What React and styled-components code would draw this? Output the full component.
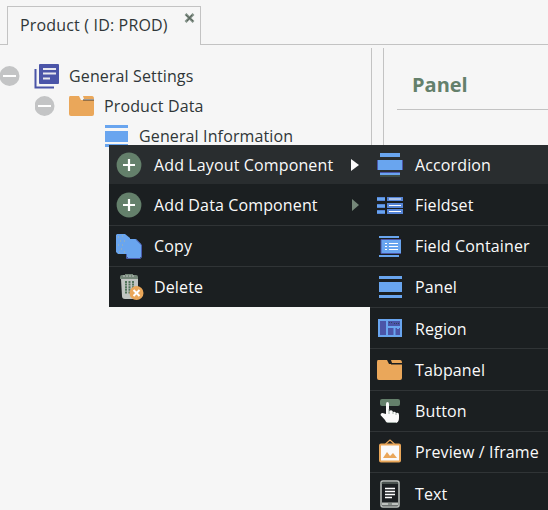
import React from "react";
import styled, { createGlobalStyle } from "styled-components";

const GlobalStyle = createGlobalStyle`
  * { box-sizing: border-box; }
  html, body { margin: 0; overflow: hidden; background: #f6f6f6; }
  svg { display: block; flex: none; }
`;

const Page = styled.main`
  width: 548px;
  height: 510px;
  position: relative;
  overflow: hidden;
  display: flex;
  flex-direction: column;
  background: #f6f6f6;
  color: #303638;
  font-family: "Open Sans", sans-serif;
  font-size: 16px;
  letter-spacing: 0.13px;
  white-space: nowrap;
`;

const TabStrip = styled.header`
  display: grid;
  grid-template-columns: 7px 194px 1fr;
  height: 45px;
  padding-top: 6px;
  flex: none;
`;

const StripLine = styled.div`
  border-bottom: 1px solid #c3c3c3;
`;

const Tab = styled.div`
  display: flex;
  justify-content: space-between;
  border: 1px solid #c3c3c3;
  border-bottom: 0;
  padding: 6px 5px 0 12px;
  line-height: 24px;
`;

const TabTitle = styled.span`
  letter-spacing: 0.17px;
`;

const Body = styled.div`
  display: grid;
  grid-template-columns: 372px 11px 1fr;
  flex: 1;
  padding-top: 3px;
`;

const TreePane = styled.nav`
  border-right: 1px solid #c3c3c3;
  padding-top: 13px;
`;

const TreeRow = styled.div`
  height: 30px;
  display: flex;
  align-items: center;
  padding-left: ${(p) => p.$indent}px;
`;

const TreeIcon = styled.span`
  display: flex;
  width: 26px;
  margin-left: ${(p) => p.$gap}px;
  margin-right: 9px;
`;

const DetailPane = styled.section`
  grid-column: 3;
  border-left: 1px solid #c3c3c3;
  padding-left: 13px;
`;

const PanelTitle = styled.h2`
  margin: 0;
  height: 62px;
  padding: 21px 0 0 15px;
  border-bottom: 1px solid #c3c3c3;
  color: #64806b;
  font-size: 20px;
  line-height: 32px;
  font-weight: 700;
  letter-spacing: 0;
`;

const Menu = styled.div`
  position: absolute;
  z-index: ${(p) => (p.$sub ? 2 : 1)};
  left: ${(p) => (p.$sub ? 370 : 109)}px;
  top: 145px;
  width: ${(p) => (p.$sub ? 178 : 261)}px;
  background: #1b1f21;
  color: #fafafa;
  font-weight: 500;
`;

const MenuRow = styled.div`
  height: ${(p) => p.$height}px;
  display: flex;
  align-items: center;
  padding-left: 7px;
  background: ${(p) => (p.$active ? "#292d2f" : "transparent")};
  border-bottom: ${(p) => (p.$line ? "1px solid #303436" : "0")};
`;

const MenuIcon = styled.span`
  display: flex;
  width: 26px;
  margin-right: 12px;
`;

const MenuLabel = styled.span`
  flex: 1;
  padding-top: ${(p) => p.$drop || 0}px;
`;

const Arrow = styled.span`
  width: 0;
  height: 0;
  margin-right: 11px;
  border: solid transparent;
  border-width: ${(p) => (p.$active ? "6px 0 6px 8px" : "6px 0 6px 7px")};
  border-left-color: ${(p) => (p.$active ? "#fafafa" : "#758779")};
`;

const Svg = ({ w = 26, h = 26, children }) => (
  <svg width={w} height={h} viewBox={`0 0 ${w} ${h}`}>{children}</svg>
);

const Minus = () => (
  <Svg w={20} h={20}>
    <circle cx="9.500" cy="10" r="10" fill="#c3c4c5" />
    <path d="M3 10h13" stroke="#fff" strokeWidth="2" />
  </Svg>
);

const Docs = () => (
  <Svg w={26} h={26}>
    <path d="M1.500 6v18.500H20" fill="none" stroke="#4b55a8" strokeWidth="2" />
    <rect x="5" y="1" width="20" height="20" rx="1" fill="#4b55a8" />
    <path d="M9 6h13M9 10.500h13M9 15.500h7" stroke="#e8e8ee" strokeWidth="2" />
  </Svg>
);

const Folder = ({ dark }) => (
  <Svg w={26} h={20}>
    <path d="M1 0h9l2 4h13v14q0 2-2 2H2q-2 0-2-2V2q0-2 1-2z" fill="#eaa75a" />
    <path d="M14 0h9q2 0 2 3H15z" fill="#eaa75a" />
    <path d="M14 4h11" stroke={dark ? "#1b1f21" : "#453d35"} strokeWidth="1" />
  </Svg>
);

const PanelGlyph = ({ light }) => (
  <Svg w={26} h={24}>
    <path
      d={light ? "M1 1h23v3H1zM1 7h23v11H1zM1 20h23v3H1z" : "M2 1h23v3H2zM2 7h23v10H2zM2 20h23v3H2z"}
      fill="#69a5ef"
    />
  </Svg>
);

const Plus = () => (
  <Svg w={26} h={26}>
    <circle cx="13" cy="13" r="12.4" fill="#64806b" />
    <path d="M7 13h12M13 7v12" stroke="#fff" strokeWidth="2.2" />
  </Svg>
);

const Copy = () => (
  <Svg w={26} h={26}>
    <path d="M1 1h8l5 4v16H2l-2-2V2z" fill="#69a5ef" />
    <path d="M11 6h9l5 5v13l-1 1H12l-2-2V7z" fill="#69a5ef" />
    <path d="M10.500 21v4.500h14l1-1V12L20 6.500" fill="none" stroke="#4a5daf" />
    <path d="M2 4h1M6 3h1M4 8h1M2 12h1M5 16h1M3 19h1M8 19h1M8 8h1M6 12h1" stroke="#afb59e" />
  </Svg>
);

const Trash = () => (
  <Svg w={28} h={28}>
    <path d="M4 4q0-2 2-2h3V1h8v1h3q2 0 2 2v2H4z" fill="#758779" />
    <path d="M7 3h12" stroke="#c1c5c2" strokeDasharray="2 1" />
    <path d="M5 6h17v17q0 3-3 3H9q-3 0-3-3z" fill="#c1c5c2" />
    <path d="M10 8v13M13.500 8v13M17 8v11" stroke="#52745b" strokeWidth="2" strokeDasharray="2 .6" />
    <circle cx="20.500" cy="20" r="7" fill="#eaa75a" />
    <path d="M17.500 17l6 6M23.500 17l-6 6" stroke="#fff" strokeWidth="2" />
  </Svg>
);

const Accordion = () => (
  <Svg w={26} h={25}>
    <path d="M3 1h20v4H3zM1 8h24v10H1zM3 20h20v3H3z" fill="#69a5ef" />
    <path d="M.5 8v10M25.500 8v10M3 20.500h20" stroke="#4b55a8" />
    <path d="M3 24h20" stroke="#526c5c" />
  </Svg>
);

const Fieldset = () => (
  <Svg w={26} h={18}>
    <path d="M0 1h8v4H0zM0 8h8v4H0zM0 14h8v4H0zM10 1h16v4H10zM10 7h16v5H10zM10 13h16v5H10z" fill="#5584d6" />
    <path d="M12 3h12M12 9.500h12M12 15.500h12" stroke="#fff" />
    <path d="M0 3h8M0 10h8M0 16h8" stroke="#69a5ef" strokeWidth="2" />
  </Svg>
);

const Container = () => (
  <Svg w={26} h={24}>
    <path d="M2 2h20v2H2zM4 6h20v13H4zM2 21h20v2H2z" fill="#69a5ef" />
    <path d="M24 5.500H4v14h20" fill="none" stroke="#4b55a8" />
    <path d="M8 9.500h2M12 9.500h9M8 12.500h2M12 12.500h9M8 15.500h2M12 15.500h9" stroke="#fff" strokeWidth="1" />
  </Svg>
);

const Region = () => (
  <Svg w={26} h={20}>
    <rect x="2" y="2" width="22" height="16" fill="#4b55a8" stroke="#69a5ef" strokeWidth="2" />
    <path d="M10 3v14M11 9h12M17.500 9v8M21 9v2" stroke="#69a5ef" strokeWidth="2" />
    <path d="M12 4.500h4M17 5.500h5" stroke="#30445e" strokeDasharray="1 1" />
  </Svg>
);

const ButtonGlyph = () => (
  <Svg w={26} h={28}>
    <rect x="3" y="2" width="20" height="7" rx="2" fill="#64806b" />
    <path d="M9 17V7q0-2 1.500-2T12 7v7q3-2 4 1 2-1 3 1 3-1 3 2v3q0 5-4 5h-6q-3 0-4-3l-4.500-5q0-2 2-2z" fill="#fafafa" />
    <path d="M12 12v5M16 15v2M19 16v2M10 25.500h9" stroke="#8c9990" strokeWidth=".8" />
  </Svg>
);

const Picture = () => (
  <Svg w={26} h={26}>
    <path d="M8.500 5L13 1l4.500 4" fill="none" stroke="#eaa75a" strokeWidth="1.2" />
    <rect x="3" y="5.500" width="20" height="17" rx="1" fill="#fafafa" stroke="#eaa75a" strokeWidth="2" />
    <path d="M6 19l4-6 3 4 3-3 4 5z" fill="#eaa75a" />
  </Svg>
);

const TextPage = () => (
  <Svg w={26} h={28}>
    <rect x="4" y="1" width="18" height="26" rx="2" fill="none" stroke="#bec3bf" strokeWidth="1.5" />
    <path d="M4 3h17" stroke="#7a887e" />
    <path d="M8 8.500h10M8 11.500h10M8 14.500h10M8 17.500h7" stroke="#fff" strokeWidth="1.5" />
    <path d="M5 24h16" stroke="#bec3bf" strokeWidth="3" />
    <path d="M11 24h4" stroke="#56615a" />
  </Svg>
);

const CloseMark = () => (
  <Svg w={11} h={10}>
    <path d="M1.500 1l8 8M9.500 1l-8 8" stroke="#829187" strokeWidth="2.500" />
    <path d="M2 2l7 6M8 2L3 8" stroke="#465149" strokeWidth=".8" />
  </Svg>
);

const actions = [
  ["Add Layout Component", Plus, 39, false, true],
  ["Add Data Component", Plus, 42, true, true],
  ["Copy", Copy, 41, true],
  ["Delete", Trash, 40, false],
];

const components = [
  ["Accordion", Accordion, 39, false],
  ["Fieldset", Fieldset, 42, true],
  ["Field Container", Container, 41, true],
  ["Panel", PanelGlyph, 41, true],
  ["Region", Region, 41, true, 2],
  ["Tabpanel", () => <Folder dark />, 42, true],
  ["Button", ButtonGlyph, 41, true],
  ["Preview / Iframe", Picture, 41, true],
  ["Text", TextPage, 41, false],
];

export default function App() {
  return (
    <Page>
      <GlobalStyle />
      <TabStrip>
        <StripLine />
        <Tab>
          <TabTitle>Product ( ID: PROD)</TabTitle>
          <CloseMark />
        </Tab>
        <StripLine />
      </TabStrip>
      <Body>
        <TreePane>
          <TreeRow $indent={0}>
            <Minus />
            <TreeIcon $gap={14}><Docs /></TreeIcon>
            General Settings
          </TreeRow>
          <TreeRow $indent={35}>
            <Minus />
            <TreeIcon $gap={14}><Folder /></TreeIcon>
            Product Data
          </TreeRow>
          <TreeRow $indent={104}>
            <TreeIcon $gap={0}><PanelGlyph light /></TreeIcon>
            General Information
          </TreeRow>
        </TreePane>
        <DetailPane>
          <PanelTitle>Panel</PanelTitle>
        </DetailPane>
      </Body>
      <Menu>
        {actions.map(([label, Icon, height, line, expands], i) => (
          <MenuRow key={label} $height={height} $line={line} $active={i === 0}>
            <MenuIcon><Icon /></MenuIcon>
            <MenuLabel>{label}</MenuLabel>
            {expands && <Arrow $active={i === 0} />}
          </MenuRow>
        ))}
      </Menu>
      <Menu $sub>
        {components.map(([label, Icon, height, line, drop], i) => (
          <MenuRow key={label} $height={height} $line={line} $active={i === 0}>
            <MenuIcon><Icon /></MenuIcon>
            <MenuLabel $drop={drop}>{label}</MenuLabel>
          </MenuRow>
        ))}
      </Menu>
    </Page>
  );
}
